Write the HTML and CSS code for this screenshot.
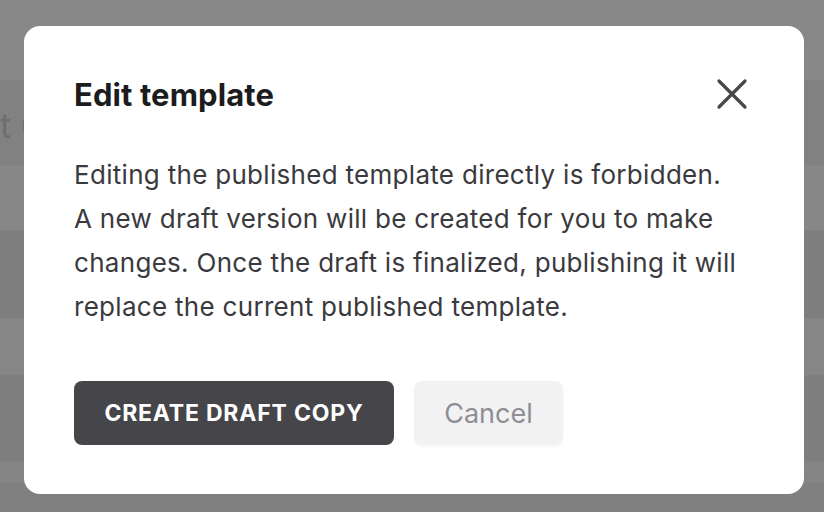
FILE: index.html
```html
<!DOCTYPE html>
<html>
<head>
<meta charset="utf-8">
<link rel="stylesheet" href="styles.css">
</head>
<body>
<div class="backdrop">
  <div class="row r1"></div>
  <div class="row r2"><span class="bg-text">t C</span></div>
  <div class="row r3"></div>
  <div class="row r4"></div>
  <div class="row r5"></div>
  <div class="row r6"></div>
  <div class="row r7"></div>
  <div class="row r8"></div>
</div>
<div class="dialog">
  <div class="dialog-header">
    <h2 class="dialog-title">Edit template</h2>
    <button class="close-btn" aria-label="Close">
      <svg width="32" height="32" viewBox="0 0 32 32"><path d="M3 3 L29 29 M29 3 L3 29" stroke="#47474b" stroke-width="3.2" stroke-linecap="round" fill="none"/></svg>
    </button>
  </div>
  <p class="dialog-body">Editing the published template directly is forbidden.<br>A new draft version will be created for you to make changes. Once the draft is finalized, publishing it will replace the current published template.</p>
  <div class="dialog-actions">
    <button class="btn btn-primary">CREATE DRAFT COPY</button>
    <button class="btn btn-secondary">Cancel</button>
  </div>
</div>
</body>
</html>
```
FILE: styles.css
```css
html, body {
  margin: 0;
  padding: 0;
  width: 824px;
  height: 512px;
  overflow: hidden;
  font-family: Inter, "Noto Sans", sans-serif;
}
.backdrop {
  display: flex;
  flex-direction: column;
  height: 512px;
}
.row { flex: none; display: flex; align-items: center; }
.r1 { height: 80px; background: #888888; }
.r2 { height: 86px; background: #818181; }
.r3 { height: 64px; background: #878787; }
.r4 { height: 88px; background: #7f7f7f; }
.r5 { height: 57px; background: #868686; }
.r6 { height: 87px; background: #7f7f7f; }
.r7 { height: 21px; background: #858585; }
.r8 { height: 29px; background: #808080; }
.bg-text {
  font-size: 34px;
  color: #6e6e6e;
  margin-left: 0;
  margin-top: 4px;
}
.dialog {
  position: absolute;
  left: 24px;
  top: 26px;
  width: 780px;
  height: 468px;
  box-sizing: border-box;
  background: #ffffff;
  border-radius: 16px;
  padding: 48px 56px 0 50px;
}
.dialog-header {
  display: flex;
  justify-content: space-between;
  align-items: center;
  height: 40px;
}
.dialog-title {
  margin: 0;
  font-size: 31px;
  font-weight: 700;
  color: #1c1c1e;
  letter-spacing: 0.1px;
}
.close-btn {
  border: 0;
  background: none;
  padding: 0;
  width: 32px;
  height: 32px;
}
.dialog-body {
  margin: 39px 0 0 0;
  font-size: 26px;
  line-height: 44px;
  color: #3a3a3e;
  letter-spacing: 0.3px;
  max-width: 700px;
}
.dialog-actions {
  display: flex;
  gap: 20px;
  margin-top: 52px;
}
.btn {
  font-family: Inter, "Noto Sans", sans-serif;
  border: 0;
  border-radius: 8px;
  height: 64px;
}
.btn-primary {
  background: #46464a;
  color: #ffffff;
  font-weight: 700;
  font-size: 23px;
  width: 320px;
  letter-spacing: 0.8px;
}
.btn-secondary {
  background: #f2f2f3;
  color: #8e8e95;
  font-size: 27px;
  width: 149px;
  box-shadow: 0 2px 3px rgba(0,0,0,0.04);
}
```
